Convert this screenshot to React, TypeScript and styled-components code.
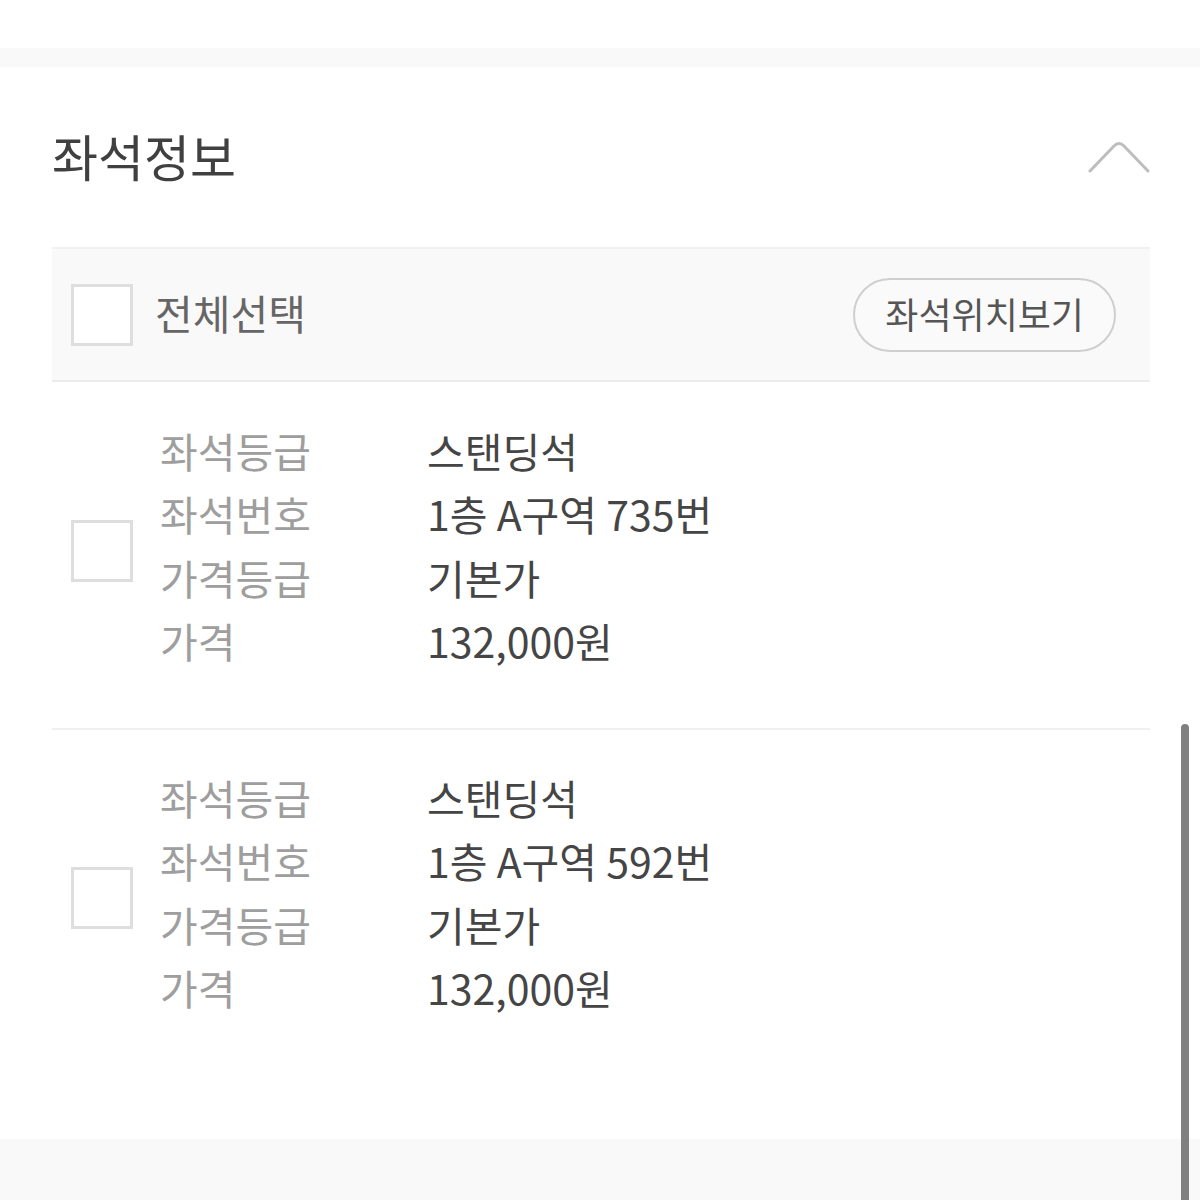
import styled, { createGlobalStyle } from 'styled-components';

const GlobalStyle = createGlobalStyle`
  html, body {
    margin: 0;
    padding: 0;
    background: #fff;
  }
  body {
    font-family: "Noto Sans CJK KR", "Noto Sans", sans-serif;
  }
`;

const Page = styled.div`
  position: relative;
  min-height: 1200px;
  display: flex;
  flex-direction: column;
  background: #fff;
  overflow: hidden;
`;

const TopGap = styled.div`
  height: 48px;
  background: #fff;
`;

const Band = styled.div`
  height: 19px;
  background: #f9f9f9;
`;

const Section = styled.section`
  padding: 0 50px 0 52px;
`;

const TitleRow = styled.div`
  height: 180px;
  display: flex;
  align-items: center;
  justify-content: space-between;
`;

const Title = styled.h2`
  margin: 0;
  font-size: 50px;
  font-weight: 400;
  color: #404040;
  line-height: 1;
  padding-bottom: 4px;
`;

const Toggle = styled.button`
  border: 0;
  background: none;
  padding: 0;
  width: 62px;
  height: 40px;
  display: flex;
  align-items: center;
  justify-content: center;
  cursor: pointer;
`;

const HeaderBar = styled.div`
  height: 131px;
  background: #f9f9f9;
  border-top: 2px solid #f1f1f1;
  border-bottom: 2px solid #ececec;
  display: flex;
  align-items: center;
  justify-content: space-between;
  padding: 0 34px 0 19px;
`;

const CheckLabel = styled.label`
  display: flex;
  align-items: center;
  gap: 22px;
  font-size: 41px;
  color: #666;
`;

const LabelText = styled.span`
  padding-bottom: 6px;
`;

const Box = styled.span`
  width: 62px;
  height: 62px;
  box-sizing: border-box;
  border: 3px solid #dedede;
  background: #fff;
  flex-shrink: 0;
`;

const RowBox = styled(Box)`
  margin-top: 12px;
`;

const PillButton = styled.button`
  height: 74px;
  padding: 0 30px 4px;
  border: 2px solid #cfcfcf;
  border-radius: 37px;
  background: #fafafa;
  font-family: inherit;
  font-size: 36px;
  color: #555;
  cursor: pointer;
`;

const Item = styled.div<{ $last?: boolean }>`
  display: flex;
  align-items: center;
  padding: ${(p) => (p.$last ? '35px 0 120px' : '36px 0 56px')};
  padding-left: 19px;
  border-bottom: ${(p) => (p.$last ? 'none' : '2px solid #f0f0f0')};
`;

const InfoGrid = styled.dl`
  margin: 0 0 0 27px;
  display: grid;
  grid-template-columns: 267px auto;
  grid-auto-rows: 63.5px;
  align-items: center;
`;

const Label = styled.dt`
  font-size: 41px;
  color: #9e9e9e;
`;

const Value = styled.dd`
  margin: 0;
  font-size: 41px;
  color: #454545;
`;

const BottomBand = styled.div`
  flex: 1;
  background: #f9f9f9;
`;

const ScrollThumb = styled.div`
  position: absolute;
  right: 11px;
  top: 724px;
  bottom: -10px;
  width: 8px;
  border-radius: 4px;
  background: #808080;
`;

const seats = [
  { grade: '스탠딩석', number: '1층 A구역 735번', priceGrade: '기본가', price: '132,000원' },
  { grade: '스탠딩석', number: '1층 A구역 592번', priceGrade: '기본가', price: '132,000원' },
];

const App = () => {
  return (
    <Page>
      <GlobalStyle />
      <TopGap />
      <Band />
      <Section>
        <TitleRow>
          <Title>좌석정보</Title>
          <Toggle aria-label="접기">
            <svg width="62" height="34" viewBox="0 0 62 34" fill="none">
              <path
                d="M2 31 L26 6 Q31 1 36 6 L60 31"
                stroke="#bdbdbd"
                strokeWidth="3"
                strokeLinecap="round"
                strokeLinejoin="round"
              />
            </svg>
          </Toggle>
        </TitleRow>
        <HeaderBar>
          <CheckLabel>
            <Box />
            <LabelText>전체선택</LabelText>
          </CheckLabel>
          <PillButton>좌석위치보기</PillButton>
        </HeaderBar>
        {seats.map((s, i) => (
          <Item key={i} $last={i === seats.length - 1}>
            <RowBox />
            <InfoGrid>
              <Label>좌석등급</Label>
              <Value>{s.grade}</Value>
              <Label>좌석번호</Label>
              <Value>{s.number}</Value>
              <Label>가격등급</Label>
              <Value>{s.priceGrade}</Value>
              <Label>가격</Label>
              <Value>{s.price}</Value>
            </InfoGrid>
          </Item>
        ))}
      </Section>
      <BottomBand />
      <ScrollThumb />
    </Page>
  );
};

export default App;
